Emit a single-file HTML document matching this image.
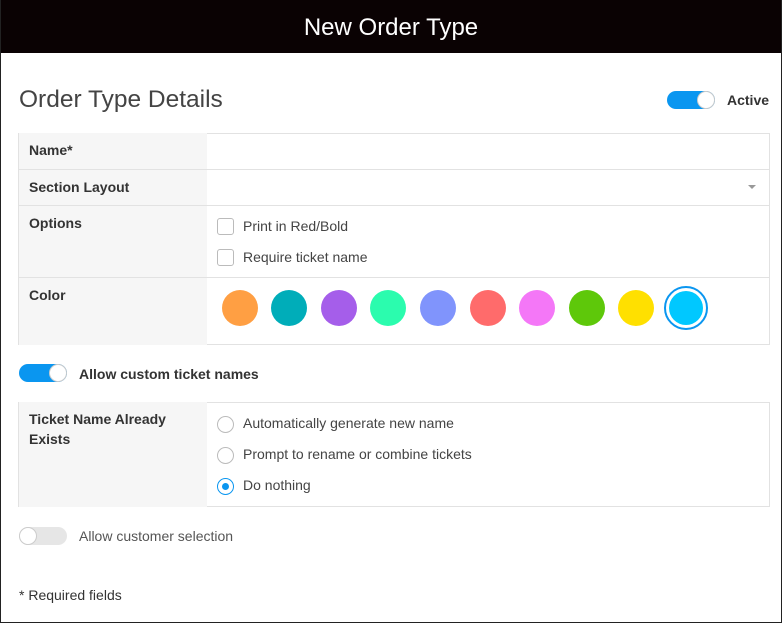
<!DOCTYPE html>
<html><head><style>
*{box-sizing:border-box;margin:0;padding:0}
body{width:782px;height:623px;position:relative;background:#fff;font-family:"Liberation Sans",sans-serif;color:#333;overflow:hidden}
.frame{position:absolute;left:0;top:0;width:782px;height:623px;border:1px solid #222;border-top:none}
.hdr{position:absolute;left:0;top:0;width:782px;height:53px;background:#0a0203;color:#fff;font-size:24px;text-align:center;line-height:55px}
.a{position:absolute;white-space:nowrap}
.tbl{position:absolute;left:18px;width:752px;border:1px solid #e2e2e2;background:#fff}
.row{position:absolute;left:0;width:750px;border-top:1px solid #e2e2e2}
.lab{position:absolute;left:0;top:0;bottom:0;width:188px;background:#f6f6f6;font-weight:bold;font-size:14px;padding:7px 10px;line-height:20px;color:#333}
.cb{position:absolute;width:17px;height:17px;border:1px solid #bbb;border-radius:3px;background:#fff}
.rd{position:absolute;width:17px;height:17px;border:1px solid #bbb;border-radius:50%;background:#fff}
.t{font-size:14px;color:#444}
.c{position:absolute;width:36px;height:36px;border-radius:50%;top:290px}
.tog{position:absolute;width:48px;height:18px;border-radius:9px}
.th{position:absolute;top:0;width:18px;height:18px;border-radius:50%;background:#fff;border:1px solid #ccc}
</style></head><body>
<div class="hdr">New Order Type</div>
<div class="a" style="left:19px;top:86px;font-size:24.5px;color:#444">Order Type Details</div>
<div class="tog" style="left:667px;top:91px;background:#0a96f0"><div class="th" style="right:0"></div></div>
<div class="a" style="left:727px;top:92px;font-size:14px;font-weight:bold">Active</div>

<div class="tbl" style="top:133px;height:212px">
 <div class="row" style="top:-1px;height:37px;border-top:none"><div class="lab">Name*</div></div>
 <div class="row" style="top:35px;height:37px"><div class="lab">Section Layout</div>
  <div class="a" style="left:729px;top:15px;width:0;height:0;border-left:4px solid transparent;border-right:4px solid transparent;border-top:4px solid #999"></div></div>
 <div class="row" style="top:71px;height:73px"><div class="lab">Options</div></div>
 <div class="row" style="top:143px;height:68px"><div class="lab">Color</div></div>
</div>
<div class="cb" style="left:217px;top:218px"></div><div class="a t" style="left:243px;top:218px">Print in Red/Bold</div>
<div class="cb" style="left:217px;top:249px"></div><div class="a t" style="left:243px;top:249px">Require ticket name</div>

<div class="c" style="left:222px;background:#ff9f43"></div>
<div class="c" style="left:271px;background:#00adb9"></div>
<div class="c" style="left:321px;background:#a55eea"></div>
<div class="c" style="left:370px;background:#2bfcae"></div>
<div class="c" style="left:420px;background:#8094fc"></div>
<div class="c" style="left:470px;background:#ff6b6b"></div>
<div class="c" style="left:519px;background:#f477f7"></div>
<div class="c" style="left:569px;background:#5ec80a"></div>
<div class="c" style="left:618px;background:#ffe000"></div>
<div class="a" style="left:664px;top:286px;width:44px;height:44px;border-radius:50%;border:2px solid #0a96f0;background:#fff"><div style="position:absolute;left:3px;top:3px;width:34px;height:34px;border-radius:50%;background:#00c8ff"></div></div>

<div class="tog" style="left:19px;top:364px;background:#0a96f0"><div class="th" style="right:0"></div></div>
<div class="a" style="left:79px;top:366px;font-size:14px;font-weight:bold">Allow custom ticket names</div>

<div class="tbl" style="top:402px;height:105px">
 <div class="row" style="top:-1px;height:105px;border-top:none"><div class="lab">Ticket Name Already Exists</div></div>
</div>
<div class="rd" style="left:217px;top:416px"></div><div class="a t" style="left:243px;top:415px">Automatically generate new name</div>
<div class="rd" style="left:217px;top:447px"></div><div class="a t" style="left:243px;top:446px">Prompt to rename or combine tickets</div>
<div class="rd" style="left:217px;top:478px;border-color:#0a96f0"><div style="position:absolute;left:4px;top:4px;width:7px;height:7px;border-radius:50%;background:#0a96f0"></div></div><div class="a t" style="left:243px;top:477px">Do nothing</div>

<div class="tog" style="left:19px;top:527px;background:#e6e6e6"><div class="th" style="left:0"></div></div>
<div class="a t" style="left:79px;top:528px;color:#555">Allow customer selection</div>
<div class="a" style="left:19px;top:587px;font-size:14px;color:#333">* Required fields</div>
<div class="frame"></div>
</body></html>
